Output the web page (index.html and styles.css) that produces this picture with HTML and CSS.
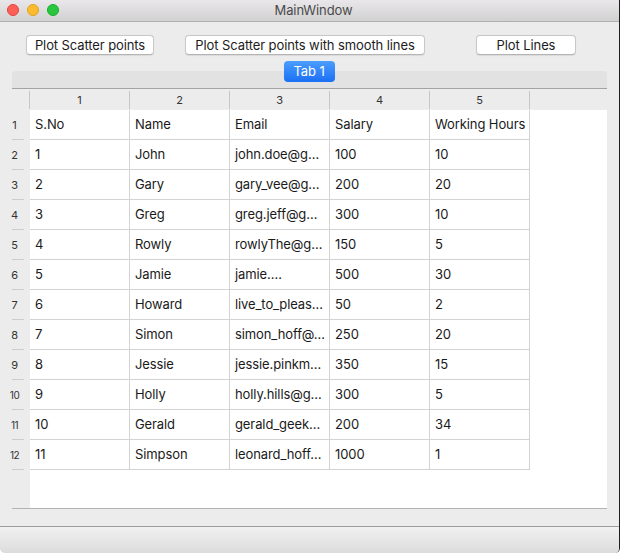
FILE: index.html
```html
<!DOCTYPE html>
<html>
<head>
<meta charset="utf-8">
<link rel="stylesheet" href="styles.css">
</head>
<body>
<div class="window">
  <div class="titlebar">
    <div class="lights">
      <span class="light red"></span>
      <span class="light yellow"></span>
      <span class="light green"></span>
    </div>
    <div class="title">MainWindow</div>
  </div>
  <div class="main">
    <div class="buttons">
      <button class="btn b1">Plot Scatter points</button>
      <button class="btn b2">Plot Scatter points with smooth lines</button>
      <button class="btn b3">Plot Lines</button>
    </div>
    <div class="tabbar">
      <div class="tab">Tab 1</div>
    </div>
    <div class="frame">
      <div class="hheader">
        <div class="corner"></div>
        <div class="hcell">1</div>
        <div class="hcell">2</div>
        <div class="hcell">3</div>
        <div class="hcell">4</div>
        <div class="hcell">5</div>
        <div class="hcell last"></div>
      </div>
      <div class="body">
        <div class="vheader">
          <div class="vrow"><span class="vnum">1</span></div>
          <div class="vrow"><span class="vnum">2</span></div>
          <div class="vrow"><span class="vnum">3</span></div>
          <div class="vrow"><span class="vnum">4</span></div>
          <div class="vrow"><span class="vnum">5</span></div>
          <div class="vrow"><span class="vnum">6</span></div>
          <div class="vrow"><span class="vnum">7</span></div>
          <div class="vrow"><span class="vnum">8</span></div>
          <div class="vrow"><span class="vnum">9</span></div>
          <div class="vrow"><span class="vnum small">10</span></div>
          <div class="vrow"><span class="vnum small">11</span></div>
          <div class="vrow"><span class="vnum small">12</span></div>
        </div>
        <div class="data">
          <div class="row"><div class="cell">S.No</div><div class="cell">Name</div><div class="cell">Email</div><div class="cell">Salary</div><div class="cell">Working Hours</div></div>
          <div class="row"><div class="cell">1</div><div class="cell">John</div><div class="cell">john.doe@g…</div><div class="cell">100</div><div class="cell">10</div></div>
          <div class="row"><div class="cell">2</div><div class="cell">Gary</div><div class="cell">gary_vee@g…</div><div class="cell">200</div><div class="cell">20</div></div>
          <div class="row"><div class="cell">3</div><div class="cell">Greg</div><div class="cell">greg.jeff@g…</div><div class="cell">300</div><div class="cell">10</div></div>
          <div class="row"><div class="cell">4</div><div class="cell">Rowly</div><div class="cell">rowlyThe@g…</div><div class="cell">150</div><div class="cell">5</div></div>
          <div class="row"><div class="cell">5</div><div class="cell">Jamie</div><div class="cell">jamie.…</div><div class="cell">500</div><div class="cell">30</div></div>
          <div class="row"><div class="cell">6</div><div class="cell">Howard</div><div class="cell">live_to_pleas…</div><div class="cell">50</div><div class="cell">2</div></div>
          <div class="row"><div class="cell">7</div><div class="cell">Simon</div><div class="cell">simon_hoff@…</div><div class="cell">250</div><div class="cell">20</div></div>
          <div class="row"><div class="cell">8</div><div class="cell">Jessie</div><div class="cell">jessie.pinkm…</div><div class="cell">350</div><div class="cell">15</div></div>
          <div class="row"><div class="cell">9</div><div class="cell">Holly</div><div class="cell">holly.hills@g…</div><div class="cell">300</div><div class="cell">5</div></div>
          <div class="row"><div class="cell">10</div><div class="cell">Gerald</div><div class="cell">gerald_geek…</div><div class="cell">200</div><div class="cell">34</div></div>
          <div class="row"><div class="cell">11</div><div class="cell">Simpson</div><div class="cell">leonard_hoff…</div><div class="cell">1000</div><div class="cell">1</div></div>
        </div>
      </div>
    </div>
  </div>
  <div class="statusbar"></div>
</div>
</body>
</html>
```
FILE: styles.css
```css
* { box-sizing: border-box; }
html, body {
  margin: 0;
  padding: 0;
  width: 621px;
  height: 553px;
  overflow: hidden;
  background: #ffffff;
  font-family: "Inter", "Liberation Sans", sans-serif;
  letter-spacing: -0.1px;
}
.window {
  width: 620px;
  height: 553px;
  display: flex;
  flex-direction: column;
  background: #ececec;
  border-right: 1px solid #1e1e1e;
  border-bottom-right-radius: 5px;
  border-bottom-left-radius: 5px;
  overflow: hidden;
}
.titlebar {
  height: 22px;
  flex: none;
  display: flex;
  align-items: center;
  background: linear-gradient(#e9e7e9, #d2d1d2);
  border-bottom: 1px solid #b0afb0;
}
.lights {
  display: flex;
  gap: 8px;
  padding-left: 7px;
  width: 0;
  flex: none;
  margin-top: -1px;
}
.light {
  width: 12px;
  height: 12px;
  border-radius: 50%;
  flex: none;
}
.red { background: #fd5f57; border: 1px solid #e0443e; }
.yellow { background: #febb2e; border: 1px solid #dea123; }
.green { background: #27c840; border: 1px solid #1aab29; }
.title {
  flex: 1;
  text-align: center;
  font-size: 13px;
  color: #4a4a4a;
  margin-top: -1px;
  padding-left: 1px;
}
.main {
  flex: 1;
  display: flex;
  flex-direction: column;
  padding: 13px 12px 17px 12px;
}
.buttons {
  display: flex;
  height: 20px;
}
.btn {
  height: 20px;
  padding: 0;
  font-family: inherit;
  letter-spacing: inherit;
  font-size: 13px;
  color: #1c1c1c;
  background: #ffffff;
  border: 1px solid #c8c8c8;
  border-bottom-color: #b4b4b4;
  border-radius: 4px;
  box-shadow: 0 0.5px 1px rgba(0,0,0,0.08);
  line-height: 18px;
}
.b1 { width: 128px; margin-left: 14px; }
.b2 { width: 240px; margin-left: 31px; }
.b3 { width: 100px; margin-left: 51px; }
.tabbar {
  margin-top: 16px;
  height: 18px;
  background: #e2e2e2;
  border-top-left-radius: 4px;
  border-top-right-radius: 4px;
  border-bottom: 1px solid #a3a3a3;
  display: flex;
  justify-content: center;
}
.tab {
  margin-top: -10px;
  height: 21px;
  width: 51px;
  margin-left: -1px;
  border-radius: 4px;
  background: linear-gradient(#4b9dfd, #1b70f4);
  color: #ffffff;
  font-size: 13px;
  line-height: 21px;
  text-align: center;
}
.frame {
  flex: 1;
  display: flex;
  flex-direction: column;
  border-bottom: 1px solid #b3b3b3;
}
.hheader {
  height: 21px;
  display: flex;
  flex: none;
}
.corner { width: 17px; flex: none; }
.hcell {
  width: 100px;
  flex: none;
  margin-top: 2px;
  height: 18px;
  border-left: 1px solid #c6c6c6;
  font-size: 11px;
  color: #333333;
  text-align: center;
  line-height: 18px;
}
.hcell.last { flex: 1; width: auto; }
.body {
  flex: 1;
  display: flex;
}
.vheader {
  width: 18px;
  flex: none;
  display: flex;
  flex-direction: column;
}
.vrow {
  height: 30px;
  flex: none;
  display: flex;
  align-items: center;
  background: linear-gradient(#cdcdcd, #cdcdcd) no-repeat 0 100% / 12px 1px;
}
.vnum {
  width: 5px;
  display: flex;
  justify-content: center;
  font-size: 11px;
  color: #333333;
  margin-top: -1px;
}
.vnum.small { font-size: 10px; letter-spacing: -0.5px; }
.data {
  flex: 1;
  background: #ffffff;
  display: flex;
  flex-direction: column;
}
.row {
  display: flex;
  height: 30px;
  flex: none;
}
.cell {
  width: 100px;
  flex: none;
  border-right: 1px solid #d3d3d3;
  border-bottom: 1px solid #d3d3d3;
  padding-left: 5px;
  padding-bottom: 2px;
  display: flex;
  align-items: center;
  font-size: 13px;
  color: #1a1a1a;
  white-space: nowrap;
  overflow: hidden;
}
.statusbar {
  height: 27px;
  flex: none;
  border-top: 1px solid #9d9d9d;
  background: linear-gradient(#f1f1f1, #dcdcdc);
}
```
